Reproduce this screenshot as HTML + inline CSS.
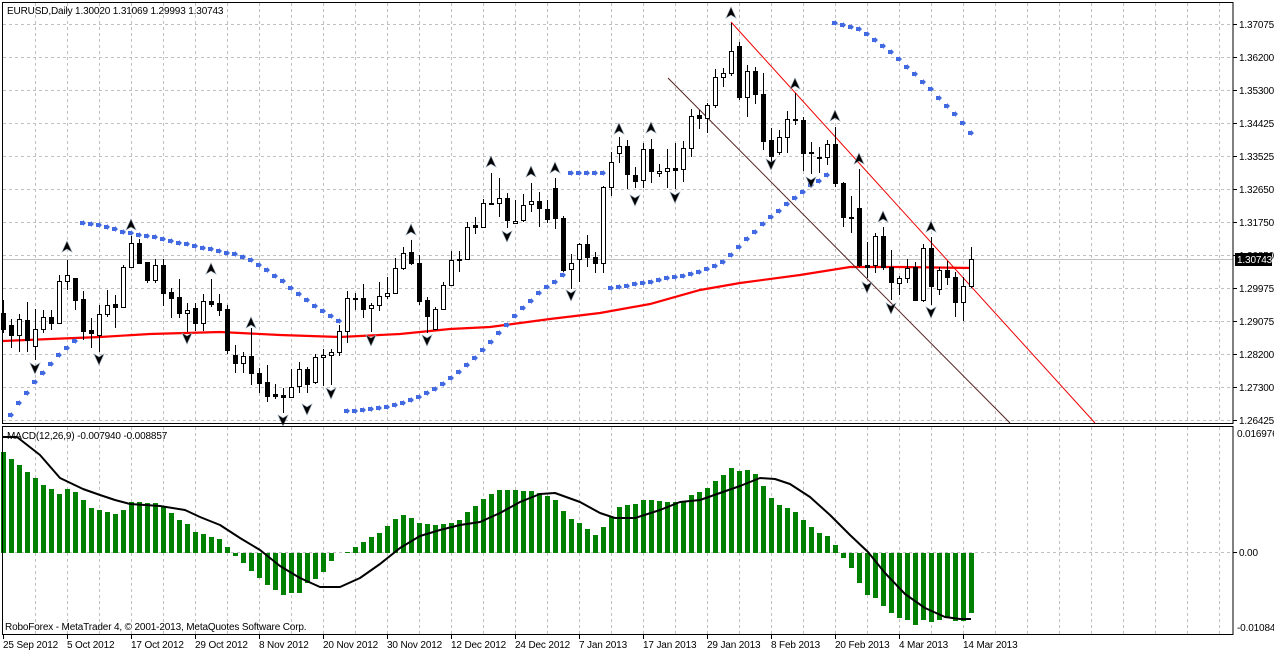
<!DOCTYPE html>
<html><head><meta charset="utf-8"><style>
html,body{margin:0;padding:0;background:#fff;width:1274px;height:651px;overflow:hidden}
svg{display:block}
text{font-family:"Liberation Sans",sans-serif;font-size:10px;letter-spacing:-0.15px;fill:#000}
</style></head><body>
<svg id="c" width="1274" height="651" viewBox="0 0 1274 651" xmlns="http://www.w3.org/2000/svg" shape-rendering="crispEdges">
<rect width="1274" height="651" fill="#fff"/>
<g id="grid" stroke="#c0c0c0" stroke-dasharray="3,3" stroke-width="1"></g>
<line x1="3" y1="259.5" x2="1233" y2="259.5" stroke="#c0c0c0"/>
<g id="ma"></g>
<g id="sar" fill="#4169e1"></g>
<line x1="731" y1="22" x2="1095" y2="423" stroke="#e00" stroke-width="1" shape-rendering="auto"/>
<line x1="668" y1="78" x2="1010" y2="423" stroke="#552222" stroke-width="1" shape-rendering="auto"/>
<g id="candles"></g>
<g id="fr"></g>
<g id="hist" fill="#008000"></g>
<g id="sig"></g>
<rect x="2.5" y="2.5" width="1230.5" height="421" fill="none" stroke="#000"/>
<rect x="2.5" y="426.5" width="1230.5" height="208" fill="none" stroke="#000"/>
<g id="axis"></g>
<rect x="1235" y="253" width="37" height="13" fill="#000"/>
<text x="1237" y="263" style="fill:#fff">1.30743</text>
<text x="7" y="14">EURUSD,Daily  1.30020 1.31069 1.29993 1.30743</text>
<text x="7" y="439">MACD(12,26,9) -0.007940 -0.008857</text>
<text x="5" y="630">RoboForex - MetaTrader 4, © 2001-2013, MetaQuotes Software Corp.</text>
</svg>
<script>
var NS="http://www.w3.org/2000/svg";
function el(p,t,a,txt){var e=document.createElementNS(NS,t);for(var k in a)e.setAttribute(k,a[k]);if(txt!=null)e.textContent=txt;document.getElementById(p).appendChild(e);return e;}
var hy=[24,57,90,123,156,189,222,255,288,321,354,387,420];
hy.forEach(function(y){el("grid","line",{x1:3,x2:1233,y1:y+.5,y2:y+.5});});
for(var x=35;x<1233;x+=32){el("grid","line",{x1:x+.5,x2:x+.5,y1:3,y2:423});el("grid","line",{x1:x+.5,x2:x+.5,y1:427,y2:634});}
el("grid","line",{x1:3,x2:1233,y1:552.5,y2:552.5});
var pl=["1.37075","1.36200","1.35300","1.34425","1.33525","1.32650","1.31750","1.30850","1.29975","1.29075","1.28200","1.27300","1.26425"];
hy.forEach(function(y,i){el("axis","line",{x1:1233,x2:1237,y1:y+.5,y2:y+.5,stroke:"#000"});el("axis","text",{x:1239,y:y+4},pl[i]);});
el("axis","text",{x:1237,y:437},"0.016976");
el("axis","line",{x1:1233,x2:1237,y1:552.5,y2:552.5,stroke:"#000"});
el("axis","text",{x:1239,y:556},"0.00");
el("axis","text",{x:1237,y:631},"-0.01084");
var dl=["25 Sep 2012","5 Oct 2012","17 Oct 2012","29 Oct 2012","8 Nov 2012","20 Nov 2012","30 Nov 2012","12 Dec 2012","24 Dec 2012","7 Jan 2013","17 Jan 2013","29 Jan 2013","8 Feb 2013","20 Feb 2013","4 Mar 2013","14 Mar 2013"];
dl.forEach(function(d,i){var x=3+64*i;el("axis","line",{x1:x+.5,x2:x+.5,y1:635,y2:639,stroke:"#000"});el("axis","text",{x:x,y:648},d);});
var ma=[[3,341],[50,339],[100,337],[150,334],[220,332],[280,335],[340,337],[400,334],[450,329],[490,327],[550,319],[600,313],[650,304],[700,290],[740,283],[800,275],[850,267],[900,267],[973,268]];
el("ma","polyline",{points:ma.map(function(p){return p.join(",")}).join(" "),fill:"none",stroke:"#ff0000","stroke-width":2.2,"shape-rendering":"auto"});
var sar={};
[425,415,403,393,382,373,364,355,348,341].forEach(function(v,i){sar[i]=v;});
[223,224,225,227,229,232,233,235,236,237,239,241,243,244,246,248,249,251,253,254,257,260,265,270,276,281,288,294,300,306,311,316,321].forEach(function(v,i){sar[10+i]=v;});
[411,411,410,409,408,407,405,403,400,397,393,389,384,378,372,365,358,350,342,333,325,316,308,301,293,287,282,275].forEach(function(v,i){sar[43+i]=v;});
for(var i=71;i<=75;i++)sar[i]=173;
[288,287,286,284,283,282,280,278,277,276,274,272,269,266,262,255,247,239,232,224,217,211,204,198,192,185,181,175].forEach(function(v,i){sar[76+i]=v;});
[23,25,27,29,34,40,46,52,59,67,74,82,89,98,106,114,123,133].forEach(function(v,i){sar[104+i]=v;});
for(var k in sar){var x=3+8*k,y=sar[k];if(y<423)el("sar","path",{d:"M"+(x-3)+","+(y-2)+"h3v-1l3,3l-3,3v-1h-3z","shape-rendering":"auto"});}
var C=[[313,329,300,333,0],[325,335,319,348,0],[319,335,314,352,1],[320,340,302,352,0],[329,346,309,360,1],[317,329,310,333,1],[317,323,310,330,0],[281,323,275,324,1],[275,281,260,290,1],[278,300,278,310,0],
[299,331,291,340,0],[330,333,318,348,0],[314,335,305,352,1],[305,314,290,317,1],[304,307,295,328,0],[267,307,265,308,1],[243,267,236,268,1],[243,263,239,263,0],[262,280,262,283,0],[265,280,259,283,1],
[265,293,259,306,0],[292,298,288,318,0],[297,313,279,318,0],[310,313,303,332,1],[308,323,303,331,0],[301,323,294,331,1],[301,304,279,307,0],[303,310,294,316,0],[309,350,305,354,0],[355,363,345,373,0],
[356,363,352,373,1],[356,373,328,385,0],[373,383,368,393,0],[382,396,365,402,0],[394,396,384,399,0],[395,397,388,413,0],[387,397,369,398,1],[369,386,362,393,1],[369,384,367,393,0],[357,382,354,384,1],
[355,357,349,386,1],[352,355,349,385,1],[331,352,325,356,1],[298,331,291,343,1],[298,299,293,310,0],[298,309,284,318,0],[305,308,303,332,1],[296,305,282,311,1],[293,296,277,299,1],[268,293,258,293,1],
[253,268,247,270,1],[252,263,240,265,0],[263,301,255,305,0],[300,316,297,333,0],[309,329,307,330,1],[285,309,282,310,1],[260,285,251,285,1],[259,260,251,272,0],[227,259,222,260,1],[225,227,217,234,0],
[203,227,199,228,1],[203,204,173,204,0],[198,203,178,217,1],[198,220,193,228,0],[221,223,200,224,1],[205,220,194,222,1],[201,204,183,212,1],[201,208,192,227,0],[209,219,200,223,0],[188,218,178,229,0],
[218,270,216,272,0],[263,269,254,289,1],[244,259,243,282,1],[244,257,235,267,0],[257,263,252,273,0],[187,263,186,273,1],[162,187,152,196,1],[146,153,137,163,1],[146,174,140,189,0],[175,181,167,188,0],
[149,180,143,188,1],[149,171,139,183,0],[171,173,164,177,1],[168,171,149,188,1],[168,170,143,189,0],[148,169,141,182,1],[116,148,109,157,1],[115,118,110,129,0],[105,118,103,133,1],[77,105,69,108,1],
[73,77,68,87,1],[51,73,23,76,1],[46,97,42,100,0],[71,97,65,117,1],[71,94,67,104,0],[94,141,73,150,0],[140,156,128,163,0],[137,152,130,155,1],[119,137,111,153,1],[119,120,93,125,0],
[120,153,117,171,0],[152,153,142,174,0],[157,158,147,173,0],[144,157,140,165,1],[144,183,127,187,0],[183,217,182,227,0],[217,218,196,233,0],[208,265,169,267,0],[265,267,242,278,0],[236,265,233,273,1],
[236,267,227,270,0],[267,282,250,300,0],[278,283,276,295,1],[268,278,259,283,1],[267,300,262,300,0],[248,300,244,302,1],[248,286,237,305,0],[270,289,267,295,1],[270,277,261,285,0],[277,302,272,317,0],
[286,302,277,321,1],[259,286,247,288,1]];
C.forEach(function(c,i){var x=3+8*i;
 el("candles","line",{x1:x+.5,x2:x+.5,y1:c[2],y2:c[3],stroke:"#000"});
 var h=Math.max(c[1]-c[0],1);
 if(c[4])el("candles","rect",{x:x-1.5,y:c[0]+.5,width:4,height:h,fill:"#fff",stroke:"#000"});
 else el("candles","rect",{x:x-2,y:c[0],width:5,height:h+1,fill:"#000"});
});
var up=[[67,247],[131,225],[211,269],[251,323],[411,230],[491,162],[531,172],[555,168],[619,129],[651,128],[731,13],[795,84],[835,116],[859,159],[883,217],[931,227]];
var dn=[[35,368],[99,359],[187,338],[283,420],[307,409],[331,393],[371,340],[427,340],[507,236],[571,295],[635,200],[675,197],[771,164],[811,182],[867,287],[891,308],[931,312]];
up.forEach(function(p){el("fr","path",{d:"M"+p[0]+","+(p[1]-6)+"l5,11l-5,-3l-5,3z",fill:"#000",stroke:"#8899aa","stroke-width":.6,"shape-rendering":"auto"});});
dn.forEach(function(p){el("fr","path",{d:"M"+p[0]+","+(p[1]+6)+"l5,-11l-5,3l-5,-3z",fill:"#000",stroke:"#8899aa","stroke-width":.6,"shape-rendering":"auto"});});
var H=[[3,452],[35,478],[43,485],[51,489],[59,494],[67,489],[75,492],[83,500],[91,508],[107,512],[115,514],[123,510],[131,502],[155,503],[163,507],[171,513],[179,520],[187,524],[195,532],[219,539],[227,547],[235,556],[243,563],[251,571],[259,578],[267,585],[275,590],[283,595],[291,593],[299,593],[307,583],[315,579],[323,572],[331,561],[339,553],[347,552],[355,547],[363,542],[371,537],[379,533],[387,526],[395,519],[403,515],[411,518],[419,523],[435,525],[451,523],[459,520],[467,512],[475,506],[483,499],[491,494],[499,490],[515,490],[531,491],[539,493],[547,496],[555,500],[563,511],[571,519],[579,523],[587,529],[595,535],[603,527],[611,517],[619,507],[627,505],[635,504],[643,500],[651,500],[667,502],[683,501],[691,495],[699,492],[707,488],[715,481],[723,475],[731,468],[739,471],[747,470],[755,474],[763,486],[771,498],[779,505],[787,508],[795,512],[803,520],[811,527],[819,533],[827,536],[835,545],[843,558],[851,568],[859,583],[867,595],[875,598],[883,606],[891,613],[899,618],[907,620],[915,625],[923,620],[931,622],[939,620],[947,618],[955,621],[963,621],[971,613]];
function interp(x){for(var j=0;j<H.length-1;j++){if(x>=H[j][0]&&x<=H[j+1][0]){var t=(x-H[j][0])/(H[j+1][0]-H[j][0]);return H[j][1]+t*(H[j+1][1]-H[j][1]);}}return H[H.length-1][1];}
for(var i=0;i<=121;i++){var x=3+8*i,y=Math.round(interp(x));var z=553;
 if(y<z)el("hist","rect",{x:x-2,y:y,width:5,height:z-y});else if(y>z)el("hist","rect",{x:x-2,y:z,width:5,height:y-z});}
var S=[[3,437],[17,437],[40,455],[60,478],[83,489],[100,495],[115,500],[130,504],[160,506],[185,510],[200,517],[220,525],[240,538],[260,550],[280,566],[300,578],[320,587],[340,587],[360,578],[380,564],[400,548],[420,536],[440,530],[460,525],[480,522],[500,513],[520,502],[540,494],[555,493],[580,502],[600,513],[615,518],[635,518],[660,510],[680,502],[700,500],[720,493],[740,486],[760,478],[775,479],[790,484],[810,497],[830,515],[850,535],[868,552],[885,573],[905,594],[925,608],[945,617],[960,619],[971,619]];
el("sig","polyline",{points:S.map(function(p){return p.join(",")}).join(" "),fill:"none",stroke:"#000","stroke-width":2,"shape-rendering":"auto","stroke-linejoin":"round"});
</script>
</body></html>
